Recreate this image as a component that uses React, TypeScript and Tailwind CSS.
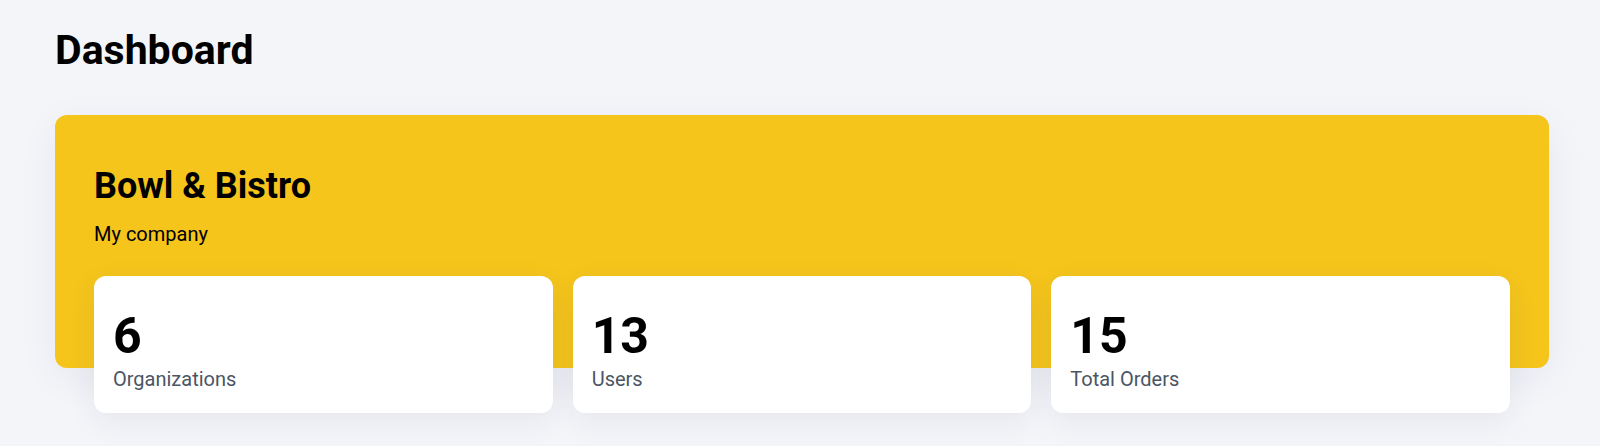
const stats = [
  { value: "6", label: "Organizations" },
  { value: "13", label: "Users" },
  { value: "15", label: "Total Orders" },
];

export default function App() {
  return (
    <div
      className="min-h-[446px] w-full bg-[#f4f5f9] pl-[55px] pr-[51px] pt-[26px]"
      style={{ fontFamily: "Roboto, 'Liberation Sans', sans-serif" }}
    >
      <h1 className="text-[41px] font-bold leading-[48px] text-black">Dashboard</h1>

      {/* flex col so the stat row's negative margin pulls the yellow edge up */}
      <div className="mt-[41px] flex flex-col rounded-[12px] bg-[#f5c51c] px-[39px] pt-[51px] shadow-[0_10px_40px_rgba(30,40,80,0.06)]">
        <h2 className="text-[36px] font-bold leading-[40px] text-black">Bowl &amp; Bistro</h2>
        <p className="mt-[14px] text-[20px] leading-[28px] text-black">My company</p>

        <div className="-mb-[45px] mt-[28px] grid grid-cols-3 gap-[20px]">
          {stats.map((s) => (
            <div
              key={s.label}
              className="h-[137px] rounded-[12px] bg-white px-[19px] pt-[35px] shadow-[0_8px_30px_rgba(30,40,80,0.07)]"
            >
              <div className="text-[50px] font-bold leading-[50px] text-black">{s.value}</div>
              <div className="mt-[4px] text-[20px] leading-[28px] text-[#4b5563]">{s.label}</div>
            </div>
          ))}
        </div>
      </div>
    </div>
  );
}
